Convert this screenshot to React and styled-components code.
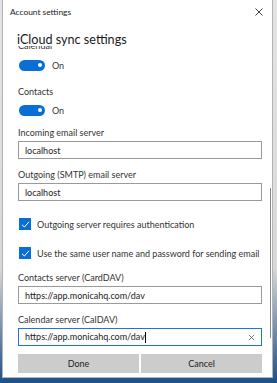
import React from 'react';
import styled, { createGlobalStyle } from 'styled-components';

const GlobalStyle = createGlobalStyle`
  html, body {
    margin: 0;
    padding: 0;
    background: #dadada;
    font-family: "Lato", "Liberation Sans", sans-serif;
  }
`;

const Desktop = styled.div`
  width: 277px;
  height: 383px;
  overflow: hidden;
  background: linear-gradient(180deg, #e4e4e4 0%, #d8d8d8 70%, #1e4f86 100%);
`;

const Dialog = styled.div`
  width: 271px;
  height: 378px;
  margin-left: 2px;
  background: #fff;
  border: 1px solid #b4b4b4;
  border-top: none;
  display: flex;
  flex-direction: column;
  box-sizing: border-box;
`;

const TitleBar = styled.div`
  height: 24px;
  display: flex;
  align-items: center;
  justify-content: space-between;
  padding: 0 9px 0 7px;
  font-size: 8.4px;
  color: #222;
`;

const CloseIcon = styled.svg`
  width: 8px;
  height: 8px;
  stroke: #444;
  stroke-width: 1;
`;

const Heading = styled.h1`
  margin: 8px 0 0 14px;
  font-size: 12.6px;
  font-weight: 400;
  line-height: 16px;
  color: #1a1a1a;
  position: relative;
  z-index: 1;
`;

const ScrollArea = styled.div`
  flex: 1;
  position: relative;
  overflow: hidden;
  margin-top: -2px;
`;

const Content = styled.div`
  margin-top: -7px;
  padding: 0 10px 0 15px;
`;

const Thumb = styled.div`
  position: absolute;
  right: 1px;
  top: 142px;
  width: 1px;
  height: 150px;
  background: #888;
`;

const Label = styled.div`
  font-size: 9px;
  line-height: 14px;
  color: #333;
`;

const Group = styled.div`
  margin-bottom: ${p => p.$gap || 9}px;
`;

const ToggleRow = styled.div`
  display: flex;
  align-items: center;
  gap: 7px;
  margin-top: ${p => p.$top || 6}px;
  font-size: 9px;
  color: #333;
  height: 12px;
`;

const Track = styled.div`
  width: 26px;
  height: 11px;
  border-radius: 6px;
  background: #0a6fd4;
  position: relative;
  margin-left: 1px;
  &::after {
    content: '';
    position: absolute;
    right: 3px;
    top: 3.5px;
    width: 4px;
    height: 4px;
    border-radius: 50%;
    background: #fff;
  }
`;

const Input = styled.div`
  margin-top: 1px;
  height: 18px;
  box-sizing: border-box;
  border: 1px solid ${p => (p.$focused ? '#1f74d6' : '#9a9a9a')};
  display: flex;
  align-items: center;
  justify-content: space-between;
  padding: 0 6px 0 6px;
  font-size: 9px;
  color: #222;
`;

const Caret = styled.span`
  display: inline-block;
  width: 1px;
  height: 11px;
  background: #000;
  vertical-align: middle;
`;

const CheckRow = styled.div`
  display: flex;
  align-items: center;
  gap: 6px;
  height: 14px;
  margin-bottom: ${p => p.$gap || 15}px;
  font-size: 9px;
  color: #333;
  white-space: nowrap;
`;

const Box = styled.div`
  width: 12px;
  height: 12px;
  background: #0a6fd4;
  display: flex;
  align-items: center;
  justify-content: center;
  flex-shrink: 0;
  margin-left: 1px;
`;

const Footer = styled.div`
  display: flex;
  gap: 2px;
  padding: 4px 10px 4px 15px;
`;

const Button = styled.button`
  flex: 1;
  height: 19px;
  border: none;
  background: #cccccc;
  font-family: inherit;
  font-size: 9px;
  color: #222;
  padding: 0;
`;

const Toggle = ({ top }) => (
  <ToggleRow $top={top}>
    <Track />
    On
  </ToggleRow>
);

const Check = ({ children, gap }) => (
  <CheckRow $gap={gap}>
    <Box>
      <svg width="9" height="9" viewBox="0 0 9 9">
        <path d="M1 4.8 L3.4 7 L8 1.8" fill="none" stroke="#fff" strokeWidth="1" />
      </svg>
    </Box>
    {children}
  </CheckRow>
);

const Field = ({ label, value, focused }) => (
  <Group>
    <Label>{label}</Label>
    <Input $focused={focused}>
      <span>
        {value}
        {focused && <Caret />}
      </span>
      {focused && (
        <svg width="7" height="7" viewBox="0 0 8 8">
          <path d="M1 1 L7 7 M7 1 L1 7" stroke="#555" strokeWidth="0.9" />
        </svg>
      )}
    </Input>
  </Group>
);

export default function App() {
  return (
    <Desktop>
      <GlobalStyle />
      <Dialog>
        <TitleBar>
          <span>Account settings</span>
          <CloseIcon viewBox="0 0 8 8">
            <path d="M0.5 0.5 L7.5 7.5 M7.5 0.5 L0.5 7.5" />
          </CloseIcon>
        </TitleBar>
        <Heading>iCloud sync settings</Heading>
        <ScrollArea>
          <Thumb />
          <Content>
            <Group $gap={14}>
              <Label>Calendar</Label>
              <Toggle top={6} />
            </Group>
            <Group $gap={10}>
              <Label>Contacts</Label>
              <Toggle top={5} />
            </Group>
            <Field label="Incoming email server" value="localhost" />
            <Group $gap={16}>
              <Label>Outgoing (SMTP) email server</Label>
              <Input>localhost</Input>
            </Group>
            <Check>Outgoing server requires authentication</Check>
            <Check gap={11}>Use the same user name and password for sending email</Check>
            <Field label="Contacts server (CardDAV)" value="https://app.monicahq.com/dav" />
            <Field label="Calendar server (CalDAV)" value="https://app.monicahq.com/dav" focused />
          </Content>
        </ScrollArea>
        <Footer>
          <Button>Done</Button>
          <Button>Cancel</Button>
        </Footer>
      </Dialog>
    </Desktop>
  );
}
